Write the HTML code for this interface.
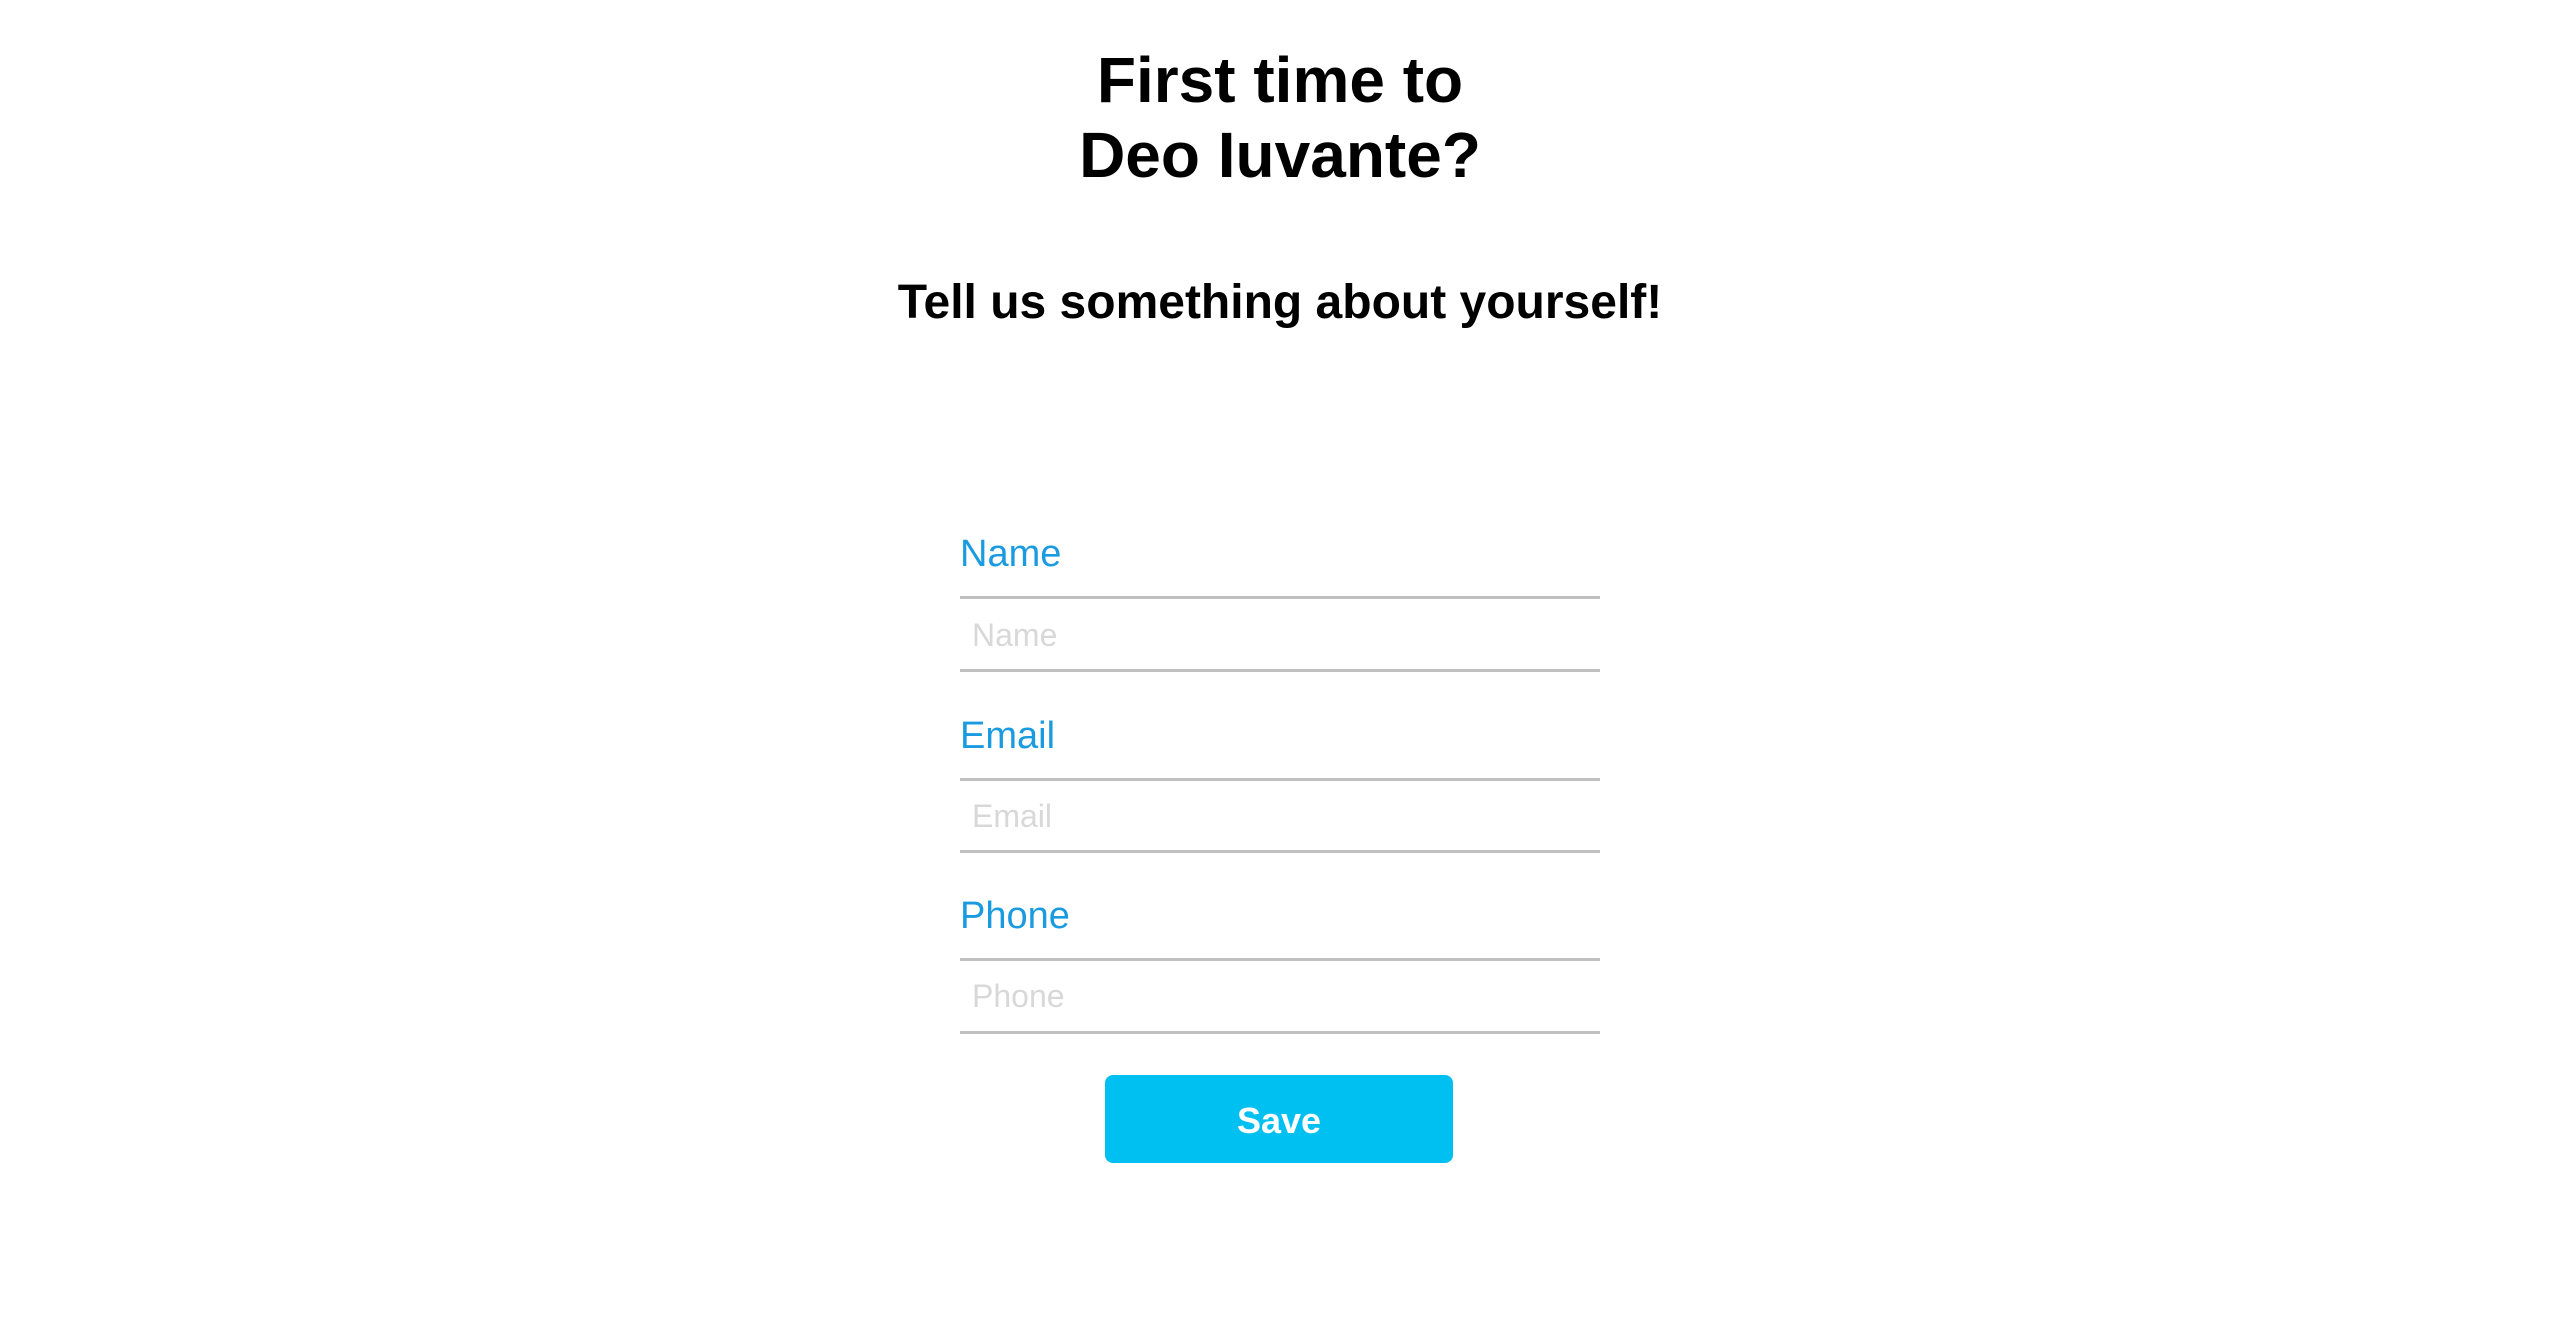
<!DOCTYPE html>
<html><head><meta charset="utf-8"><style>
html,body{margin:0;padding:0;background:#fff;width:2560px;height:1344px;overflow:hidden;font-family:"Liberation Sans",Arial,sans-serif;}
.t{position:absolute;left:0;width:2560px;text-align:center;line-height:1;white-space:nowrap;}
.h{font-weight:bold;font-size:64px;color:#000;}
.s{font-weight:bold;font-size:48px;color:#000;}
.lab{position:absolute;left:960px;font-size:38px;line-height:1;color:#1a9be0;}
.ph{position:absolute;left:972px;font-size:32px;line-height:1;color:#d8d8d8;}
.ln{position:absolute;left:960px;width:640px;height:3px;background:#c0c0c0;}
.btn{position:absolute;left:1105px;top:1075px;width:348px;height:88px;background:#00c0f2;border-radius:8px;}
.sv{position:absolute;left:1105px;width:348px;text-align:center;top:1103px;font-size:36px;line-height:1;color:#fff;font-weight:bold;}
</style></head><body>
<div class="t h" style="top:48px">First time to</div>
<div class="t h" style="top:123px">Deo Iuvante?</div>
<div class="t s" style="top:279px">Tell us something about yourself!</div>

<div class="lab" style="top:535px">Name</div>
<div class="ln" style="top:596px"></div>
<div class="ph" style="top:619px">Name</div>
<div class="ln" style="top:669px"></div>

<div class="lab" style="top:717px">Email</div>
<div class="ln" style="top:778px"></div>
<div class="ph" style="top:800px">Email</div>
<div class="ln" style="top:850px"></div>

<div class="lab" style="top:897px">Phone</div>
<div class="ln" style="top:958px"></div>
<div class="ph" style="top:980px">Phone</div>
<div class="ln" style="top:1031px"></div>

<div class="btn"></div>
<div class="sv">Save</div>
</body></html>
